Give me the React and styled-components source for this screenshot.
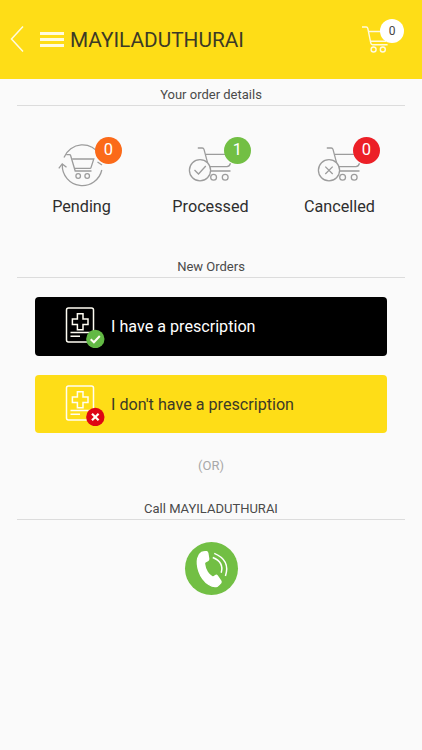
import React from 'react';
import styled, { createGlobalStyle } from 'styled-components';

const orders = [
    { id: 1, label: 'Pending', count: 0, color: '#fb6a19', type: 'pending' },
    { id: 2, label: 'Processed', count: 1, color: '#72bf44', type: 'processed' },
    { id: 3, label: 'Cancelled', count: 0, color: '#ec2027', type: 'cancelled' },
];

const OrderIcon = ({ type }) => {
    if (type === 'pending') {
        return <OrderSvg viewBox="0 0 80 60">
            <path d="M22 27.5A20 20 0 0 1 58 25" />
            <path d="M59.8 40A20 20 0 0 1 20.3 35" />
            <path d="M16.8 38.3l3.4-4.4 4.3 3.4M55.5 32l4.5 3" />
            <path d="M24.2 24.7h3.2q1 0 1.3 1L33.2 41h16.3" />
            <path d="M30.2 29h21.6l-2.8 8.6q-.2.7-1 .7H32.5" />
            <circle cx="36.2" cy="46" r="2.3" />
            <circle cx="45.2" cy="46" r="2.3" />
        </OrderSvg>
    }
    return <OrderSvg viewBox="0 0 80 60">
        <path d="M26.8 18h4.4q1.4 0 1.8 1.4L37.6 36.7H56q2.4 0 3.5-3.4" />
        <path d="M34.8 24.3H55M39.5 41h20" />
        <circle cx="42.6" cy="47.3" r="2.9" />
        <circle cx="54.2" cy="47.3" r="2.9" />
        <circle cx="29" cy="40.3" r="10.6" fill="#fafafa" />
        {
            type === 'processed' ?
            <path d="M23.5 40l4 4 7.3-8" /> :
            <path d="M25.3 36.6l7.4 7.4M32.7 36.6l-7.4 7.4" />
        }
    </OrderSvg>
}

const PrescriptionIcon = ({ added }) => {
    return (<PrescriptionSvg viewBox="0 0 42 42">
        <rect x="2.5" y="2" width="27" height="34" rx="2" />
        <path d="M13.4 7.7h5.6v5.2h5v5.6h-5v5.2h-5.6v-5.2h-5v-5.6h5z" />
        <path d="M6.5 26.6H27M6.5 30.2H16" />
        <circle cx="31.3" cy="33" r="9.2" stroke="none" fill={added ? '#62b944' : '#de0613'} />
        {
            added ?
            <path d="M26.7 33.2l3.2 3.1 5.9-6.3" strokeWidth="2" /> :
            <path d="M28 29.700l6.6 6.6M34.6 29.700l-6.6 6.6" strokeWidth="2.2" />
        }
    </PrescriptionSvg>);
}

const App = () => {
    return (<Page>
        <GlobalStyle />
        <Header>
            <BackIcon viewBox="0 0 14 28">
                <path d="M13 1.5L1.5 14 13 26.5" />
            </BackIcon>
            <MenuButton>
                <MenuBar />
                <MenuBar />
                <MenuBar />
            </MenuButton>
            <Title>MAYILADUTHURAI</Title>
            <Cart>
                <CartSvg viewBox="0 0 30 30">
                    <path d="M1 2h4.2q1.3 0 1.6 1.4l3 14.8q.3 1.6 1.8 1.6h15" />
                    <path d="M7.5 6.5H27l-2.5 9.8H9.5" />
                    <circle cx="12.6" cy="24.5" r="2.5" />
                    <circle cx="21.8" cy="24.5" r="2.5" />
                </CartSvg>
                <CartCount>0</CartCount>
            </Cart>
        </Header>

        <SectionTitle>Your order details</SectionTitle>
        <OrderList>
            {
                orders.map(order => {
                    return <Order key={order.id}>
                        <OrderPicture>
                            <OrderIcon type={order.type} />
                            <OrderCount color={order.color}>{order.count}</OrderCount>
                        </OrderPicture>
                        <OrderLabel>{order.label}</OrderLabel>
                    </Order>
                })
            }
        </OrderList>

        <SectionTitle>New Orders</SectionTitle>
        <ButtonList>
            <PrescriptionButton $dark>
                <PrescriptionIcon added />
                <ButtonText>I have a prescription</ButtonText>
            </PrescriptionButton>
            <PrescriptionButton>
                <PrescriptionIcon />
                <ButtonText>I don't have a prescription</ButtonText>
            </PrescriptionButton>
        </ButtonList>
        <OrText>(OR)</OrText>

        <SectionTitle>Call MAYILADUTHURAI</SectionTitle>
        <CallButton>
            <CallSvg viewBox="0 0 54 54">
                <path fill="#fff" d="M17 10.6Q19.5 9.6 22 10q1 .3 1.2 1.6l.9 5.6q.1 1.2-1 1.8l-2.4 1.3q-1 .6-.9 2 .4 4.4 2.9 8.3 2 3.2 5 4.9 1 .4 2-.3l1.4-1q1-.6 1.8.4l3.5 5.1q.8 1.2-.2 2.2-1.5 2-3.5 3.2-3.7 1.2-8.4-1.8-7-4.7-10-13.3-2.6-7.8-1.3-13.4Q13.800 12.600 17 10.600z" />
                <path d="M28.3 15.8Q40 20.5 36.9 31.3" />
                <path d="M29.8 11.6Q46.5 18.5 41.2 34.6" />
            </CallSvg>
        </CallButton>
    </Page>);
}

export default App;

const GlobalStyle = createGlobalStyle`
    * {
        box-sizing: border-box;
    }
    body {
        margin: 0;
        background: #fafafa;
        font-family: Roboto, "Liberation Sans", sans-serif;
    }
    button {
        border: none;
        padding: 0;
        background: none;
        font-family: inherit;
    }
`

const Page = styled.div`
    display: flex;
    flex-direction: column;
    min-height: 750px;
`

const Header = styled.header`
    display: flex;
    align-items: center;
    height: 78.5px;
    padding: 0 18px 0 10px;
    background: #fedd17;
`

const BackIcon = styled.svg`
    width: 14px;
    height: 28px;
    fill: none;
    stroke: #fffbe0;
    stroke-width: 1.5;
`

const MenuButton = styled.button`
    display: flex;
    flex-direction: column;
    gap: 3px;
    width: 24px;
    margin: 0 6px 0 16px;
`

const MenuBar = styled.span`
    height: 3px;
    background: #fffbe0;
`

const Title = styled.h1`
    flex: 1;
    margin: 0;
    padding-top: 1px;
    font-size: 20.8px;
    font-weight: 400;
    line-height: 24px;
    color: #3c3a26;
`

const Cart = styled.div`
    position: relative;
    width: 43px;
    height: 41px;
`

const CartSvg = styled.svg`
    display: block;
    width: 30px;
    height: 30px;
    margin-top: 6px;
    fill: none;
    stroke: #fffbe0;
    stroke-width: 1.4;
`

const CartCount = styled.span`
    position: absolute;
    top: 0;
    right: 0;
    width: 24px;
    height: 24px;
    border-radius: 50%;
    background: #fff;
    color: #444;
    font-size: 12px;
    line-height: 25px;
    text-align: center;
`

const SectionTitle = styled.h2`
    height: 27px;
    margin: 0 17px;
    padding-top: 7px;
    border-bottom: 1px solid #dcdcdc;
    font-size: 13px;
    font-weight: 400;
    line-height: 17px;
    text-align: center;
    color: #4a4a4a;
`

const OrderList = styled.div`
    display: grid;
    grid-template-columns: repeat(3, 129px);
    height: 145.5px;
    margin: 0 17px;
    padding-top: 24.5px;
`

const Order = styled.div`
    display: flex;
    flex-direction: column;
    align-items: center;
`

const OrderPicture = styled.div`
    position: relative;
    width: 80px;
    height: 60px;
`

const OrderSvg = styled.svg`
    display: block;
    width: 80px;
    height: 60px;
    fill: none;
    stroke: #9c9c9c;
    stroke-width: 1.3;
`

const OrderCount = styled.span`
    position: absolute;
    top: 7px;
    left: 53.5px;
    width: 27px;
    height: 27px;
    border-radius: 50%;
    background: ${props => props.color};
    color: #fff;
    font-size: 16.5px;
    line-height: 25px;
    text-align: center;
`

const OrderLabel = styled.span`
    margin-top: 7px;
    font-size: 16.2px;
    line-height: 20px;
    color: #2e2e2e;
`

const ButtonList = styled.div`
    display: flex;
    flex-direction: column;
    gap: 19px;
    padding: 19px 35px 0;
`

const PrescriptionButton = styled.button`
    display: flex;
    align-items: center;
    gap: 5px;
    height: 58.5px;
    padding-left: 29px;
    border-radius: 4px;
    background: ${props => props.$dark ? '#000' : '#fedd17'};
    color: ${props => props.$dark ? '#fff' : '#3c3a26'};
    font-size: 16.15px;
`

const ButtonText = styled.span`
    padding-top: 1px;
`

const PrescriptionSvg = styled.svg`
    width: 42px;
    height: 42px;
    margin-top: 2px;
    fill: none;
    stroke: #fffdf2;
    stroke-width: 1.5;
`

const OrText = styled.p`
    height: 60px;
    margin: 0;
    padding-top: 24px;
    font-size: 13px;
    line-height: 17px;
    text-align: center;
    color: #a8a8a8;
`

const CallButton = styled.button`
    align-self: center;
    width: 53px;
    height: 53px;
    margin-top: 22px;
    border-radius: 50%;
    background: #72bf44;
`

const CallSvg = styled.svg`
    display: block;
    fill: none;
    stroke: #fff;
    stroke-width: 1.5;
`
